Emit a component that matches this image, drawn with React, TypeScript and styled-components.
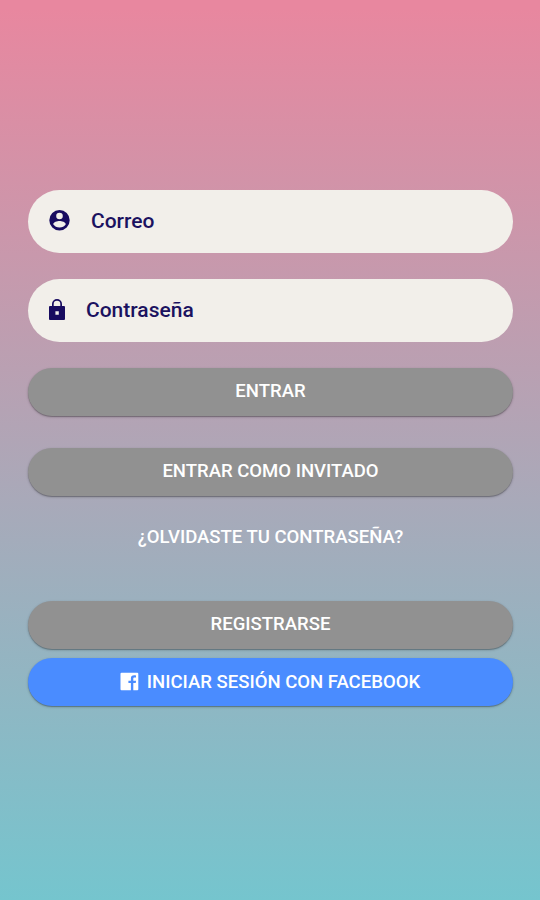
import React from 'react';
import styled, { createGlobalStyle } from 'styled-components';

const GlobalStyle = createGlobalStyle`
  * { box-sizing: border-box; }
  body { margin: 0; font-family: Roboto, "Liberation Sans", sans-serif; }
`;

const Screen = styled.main`
  width: 540px;
  height: 900px;
  padding: 190px 27px 0 28px;
  background: linear-gradient(180deg, #e8879f 0%, #e8879f 1%, #75c5ce 100%);
  overflow: hidden;
`;

const Form = styled.form`
  display: flex;
  flex-direction: column;
`;

const Field = styled.label<{ $gap: number }>`
  display: flex;
  align-items: center;
  gap: ${(p) => p.$gap}px;
  height: 63px;
  margin-bottom: 26px;
  padding: 0 20px 2px;
  border-radius: 32px;
  background: #f2efea;
  color: #1b1260;
  font-size: 21px;
  font-weight: 500;
  line-height: 24px;
`;

const FieldIcon = styled.svg`
  display: block;
  flex: none;
  fill: #180b60;
`;

const Button = styled.button<{ $color?: string; $after?: number; $drop?: number }>`
  display: flex;
  align-items: center;
  justify-content: center;
  gap: 8px;
  height: 48px;
  margin: 0 0 ${(p) => p.$after ?? 0}px;
  padding: 0 ${(p) => (p.$drop ? 1 : 0)}px ${(p) => 3 - (p.$drop ?? 0)}px 0;
  border: 0;
  border-radius: 24px;
  background: ${(p) => p.$color ?? '#919191'};
  box-shadow: 0 1px 1px rgba(0, 0, 0, 0.25), 0 1px 3px rgba(0, 0, 0, 0.2);
  color: #fff;
  font: 500 18.55px/24px Roboto, "Liberation Sans", sans-serif;
  white-space: nowrap;
`;

const LinkButton = styled(Button)`
  background: none;
  box-shadow: none;
`;

export default function App() {
  return (
    <>
      <GlobalStyle />
      <Screen>
        <Form>
          <Field $gap={19}>
            <FieldIcon width="24" height="24" viewBox="0.5 0.8 24 24">
              <path d="M12 1.8a10.2 10.2 0 1 0 0 20.4 10.2 10.2 0 0 0 0-20.4zm0 2.7a3.3 3.3 0 1 1 0 6.6 3.3 3.3 0 0 1 0-6.6zm0 14.9c-2.6 0-5-1.3-6.3-3.3.03-2.2 4.1-3.4 6.3-3.4s6.27 1.2 6.3 3.4a7.5 7.5 0 0 1-6.3 3.3z" />
            </FieldIcon>
            Correo
          </Field>
          <Field $gap={20}>
            <FieldIcon width="18" height="22" viewBox="3 1 18 22">
              <path fillRule="evenodd" d="M19 8h-2V6A5 5 0 0 0 7 6v2H5a1 1 0 0 0-1 1v12a1 1 0 0 0 1 1h14a1 1 0 0 0 1-1V9a1 1 0 0 0-1-1zM10.4 13.2h3.4v3.6h-3.4zM15.3 8H8.7V6a3.3 3.3 0 0 1 6.6 0z" />
            </FieldIcon>
            Contraseña
          </Field>
          <Button type="button" $after={32}>ENTRAR</Button>
          <Button type="button" $after={18}>ENTRAR COMO INVITADO</Button>
          <LinkButton type="button" $after={39}>¿OLVIDASTE TU CONTRASEÑA?</LinkButton>
          <Button type="button" $after={9}>REGISTRARSE</Button>
          <Button type="button" $color="#4a8cff" $drop={2}>
            <svg width="19" height="19" viewBox="0 0 19 19" fill="#fff">
              <path d="M1.5.8h15.8a1 1 0 0 1 1 1v15.4a1 1 0 0 1-1 1h-4V11h2.4l.4-2.3h-2.8V6.8c0-.8.3-1.2 1.3-1.2H16V3.4c-3.8-.5-5.1.5-5.1 3.2v2.1H8.4V11h2.5v7.2H1.5a1 1 0 0 1-1-1V1.8a1 1 0 0 1 1-1z" />
            </svg>
            INICIAR SESIÓN CON FACEBOOK
          </Button>
        </Form>
      </Screen>
    </>
  );
}
